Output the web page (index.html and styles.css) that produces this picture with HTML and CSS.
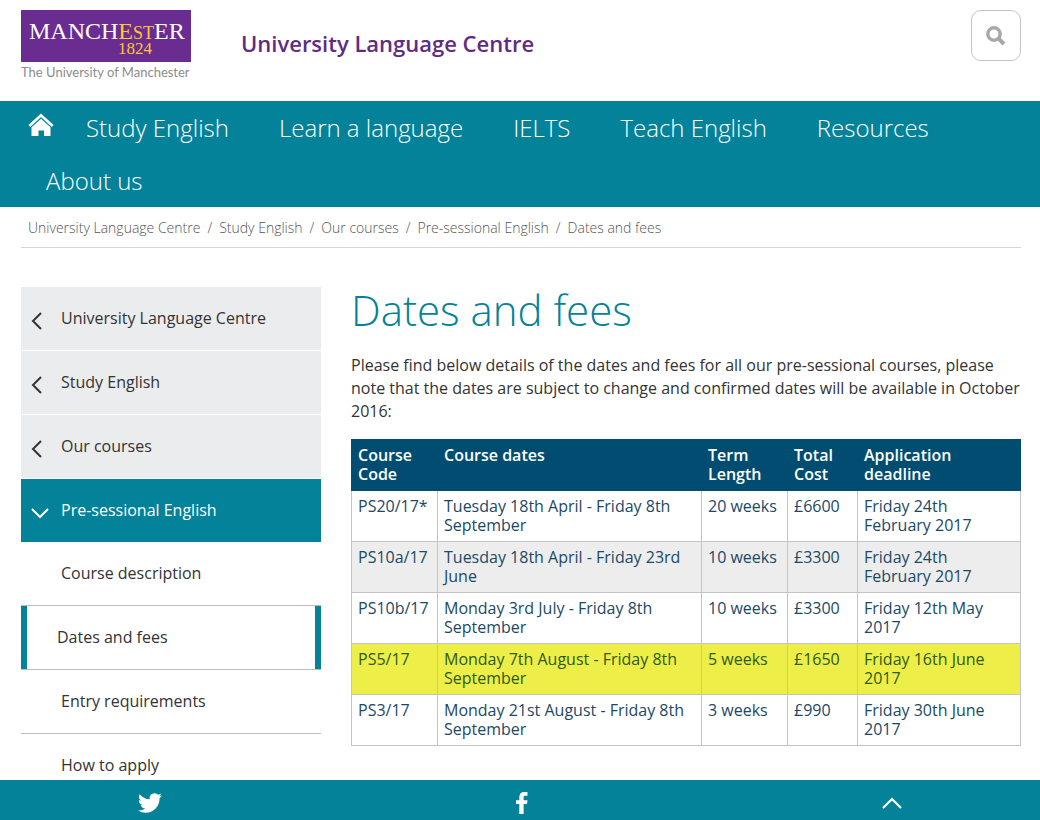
FILE: index.html
```html
<!DOCTYPE html>
<html lang="en">
<head>
<meta charset="utf-8">
<meta name="viewport" content="width=device-width, initial-scale=1">
<title>Dates and fees | University Language Centre</title>
<link rel="stylesheet" href="styles.css">
</head>
<body>
<header class="masthead">
  <a class="logo" href="#" aria-label="The University of Manchester">
    <svg width="170" height="74" viewBox="0 0 170 74" aria-hidden="true">
      <rect width="170" height="52" fill="#6b2c91"/>
      <text class="logo-name" x="8" y="29">MANCH<tspan class="logo-gold">E</tspan><tspan class="logo-gold logo-small">ST</tspan>ER</text>
      <text class="logo-year logo-gold" x="97" y="44">1824</text>
      <text class="logo-caption" x="0" y="67">The University of Manchester</text>
    </svg>
  </a>
  <a class="site-title" href="#">University Language Centre</a>
  <button class="search" type="button" aria-label="Search">
    <svg width="20" height="20" viewBox="0 0 20 20" aria-hidden="true">
      <circle cx="8" cy="8" r="6.2" fill="none" stroke="#a8a8a8" stroke-width="3.4"/>
      <path d="M12.6 12.6L18 18" stroke="#a8a8a8" stroke-width="4"/>
    </svg>
  </button>
</header>
<nav class="main-nav" aria-label="Main">
  <a class="home" href="#" aria-label="Home">
    <svg width="26" height="24" viewBox="0 0 26 24" aria-hidden="true">
      <path d="M1.3 13L13 2.2L24.7 13" fill="none" stroke="#fff" stroke-width="2.6"/>
      <path d="M3.5 14.2L13 5.8L22.5 14.2V23H16V17.5H10.5V23H3.5Z" fill="#fff"/>
    </svg>
  </a>
  <a class="nav-link" href="#">Study English</a>
  <a class="nav-link" href="#">Learn a language</a>
  <a class="nav-link" href="#">IELTS</a>
  <a class="nav-link" href="#">Teach English</a>
  <a class="nav-link" href="#">Resources</a>
  <a class="nav-link" href="#">About us</a>
</nav>
<div class="page">
  <nav aria-label="Breadcrumb">
    <ol class="breadcrumb">
      <li><a href="#">University Language Centre</a></li>
      <li><a href="#">Study English</a></li>
      <li><a href="#">Our courses</a></li>
      <li><a href="#">Pre-sessional English</a></li>
      <li><a href="#">Dates and fees</a></li>
    </ol>
  </nav>
  <div class="columns">
    <nav class="side-nav" aria-label="Section">
      <a class="side-parent" href="#"><svg class="chevron" viewBox="0 0 18 18" aria-hidden="true"><path d="M10 1L2 9L10 17"/></svg>University Language Centre</a>
      <a class="side-parent" href="#"><svg class="chevron" viewBox="0 0 18 18" aria-hidden="true"><path d="M10 1L2 9L10 17"/></svg>Study English</a>
      <a class="side-parent" href="#"><svg class="chevron" viewBox="0 0 18 18" aria-hidden="true"><path d="M10 1L2 9L10 17"/></svg>Our courses</a>
      <a class="side-section" href="#"><svg class="chevron" viewBox="0 0 18 18" aria-hidden="true"><path d="M1 5L9 13L17 5"/></svg>Pre-sessional English</a>
      <a class="side-child" href="#">Course description</a>
      <a class="side-child side-current" href="#" aria-current="page">Dates and fees</a>
      <a class="side-child" href="#">Entry requirements</a>
      <a class="side-child" href="#">How to apply</a>
    </nav>
    <main class="content">
      <h1>Dates and fees</h1>
      <p>Please find below details of the dates and fees for all our pre-sessional courses, please note that the dates are subject to change and confirmed dates will be available in October 2016:</p>
      <table class="fees">
        <colgroup><col class="col-code"><col class="col-dates"><col class="col-term"><col class="col-cost"><col></colgroup>
        <thead>
          <tr><th scope="col">Course Code</th><th scope="col">Course dates</th><th scope="col">Term Length</th><th scope="col">Total Cost</th><th scope="col">Application deadline</th></tr>
        </thead>
        <tbody>
          <tr><td>PS20/17*</td><td>Tuesday 18th April - Friday 8th September</td><td>20 weeks</td><td>£6600</td><td>Friday 24th February 2017</td></tr>
          <tr class="shaded"><td>PS10a/17</td><td>Tuesday 18th April - Friday 23rd June</td><td>10 weeks</td><td>£3300</td><td>Friday 24th February 2017</td></tr>
          <tr><td>PS10b/17</td><td>Monday 3rd July - Friday 8th September</td><td>10 weeks</td><td>£3300</td><td>Friday 12th May 2017</td></tr>
          <tr class="marked"><td>PS5/17</td><td>Monday 7th August - Friday 8th September</td><td>5 weeks</td><td>£1650</td><td>Friday 16th June 2017</td></tr>
          <tr><td>PS3/17</td><td>Monday 21st August - Friday 8th September</td><td>3 weeks</td><td>£990</td><td>Friday 30th June 2017</td></tr>
        </tbody>
      </table>
    </main>
  </div>
</div>
<footer class="share-bar">
  <a class="share-link" href="#" aria-label="Twitter">
    <svg width="24" height="22" viewBox="0 2 24 20" aria-hidden="true"><path fill="#fff" d="M23.95 4.57a10 10 0 0 1-2.82.77 4.96 4.96 0 0 0 2.16-2.72c-.95.55-2 .95-3.13 1.18a4.92 4.92 0 0 0-8.38 4.48C7.69 8.09 4.07 6.13 1.64 3.16a4.82 4.82 0 0 0-.67 2.48c0 1.71.87 3.21 2.19 4.1a4.9 4.9 0 0 1-2.23-.62v.06a4.92 4.92 0 0 0 3.95 4.83 5 5 0 0 1-2.21.08 4.94 4.94 0 0 0 4.6 3.42A9.87 9.87 0 0 1 0 19.54a13.99 13.99 0 0 0 7.56 2.21c9.05 0 14-7.5 14-13.98 0-.21 0-.42-.02-.63a9.94 9.94 0 0 0 2.41-2.57z"/></svg>
  </a>
  <a class="share-link" href="#" aria-label="Facebook">
    <svg width="12" height="22" viewBox="0 0 12 22" aria-hidden="true"><path fill="#fff" d="M3.3 22V12H0V8.2H3.3V5.2C3.3 1.9 5.2 0 8.3 0H11.5V3.8H9.4C8 3.8 7.6 4.4 7.6 5.6V8.2H11.5L11 12H7.6V22Z"/></svg>
  </a>
  <a class="share-link" href="#" aria-label="Back to top">
    <svg width="20" height="12" viewBox="0 0 20 12" aria-hidden="true"><path d="M1 11L10 2L19 11" fill="none" stroke="#fff" stroke-width="2.2"/></svg>
  </a>
</footer>
</body>
</html>
```

FILE: styles.css
```css
* { box-sizing: border-box; }

body {
  margin: 0;
  background: #fff;
  color: #333;
  font-family: "Open Sans", sans-serif;
  font-size: 16px;
  line-height: 23px;
}

a { color: inherit; text-decoration: none; }

.masthead {
  display: flex;
  align-items: flex-start;
  padding: 10px 19px 17px 21px;
}

.logo { display: block; }
.logo svg { display: block; }
.logo-name { fill: #fff; font-family: "Liberation Serif", serif; font-size: 24px; }
.logo-small { font-size: 18px; }
.logo-year { font-family: "Liberation Serif", serif; font-size: 17px; }
.logo-gold { fill: #fdc82f; }
.logo-caption { fill: #8c8c8c; font-family: Lato, sans-serif; font-size: 13px; }

.site-title {
  margin: 21px auto 0 50px;
  color: #5f2b86;
  font-size: 22px;
  font-weight: 600;
  line-height: 24px;
}

.search {
  display: grid;
  place-items: center;
  width: 50px;
  height: 51px;
  padding: 0;
  border: 1px solid #c4c4c4;
  border-radius: 10px;
  background: #fff;
}

.main-nav {
  display: flex;
  flex-wrap: wrap;
  padding: 0 21px;
  background: #038299;
  color: #fff;
  font-size: 24px;
  font-weight: 300;
  line-height: 53px;
}

.home { width: 40px; padding: 12px 0 0 7px; line-height: 1; }
.home svg { display: block; }
.nav-link { padding: 0 25px; }

.page { padding: 0 19px 0 21px; }

.breadcrumb {
  display: flex;
  flex-wrap: wrap;
  margin: 0;
  padding: 10px 7px 8px;
  border-bottom: 1px solid #d4d4d4;
  color: #555;
  font-size: 14px;
  font-weight: 340;
  line-height: 22px;
  list-style: none;
}

.breadcrumb li + li::before { content: "/"; padding: 0 7px; }

.columns { display: flex; gap: 30px; padding-top: 39px; }

.side-nav { flex: 0 0 300px; }

.side-nav a {
  display: flex;
  align-items: center;
  min-height: 64px;
  padding: 0 40px;
}

.side-nav .side-parent {
  padding-left: 10px;
  border-bottom: 1px solid #fff;
  background: #ebeced;
}

.side-nav .side-section {
  min-height: 63px;
  padding-left: 10px;
  background: #038299;
  color: #fff;
  font-weight: 500;
}

.side-nav .side-child { border-bottom: 1px solid #bbb; }

.side-nav .side-current {
  padding: 0 36px;
  box-shadow: inset 6px 0 #038299, inset -6px 0 #038299;
}

.chevron {
  flex: none;
  width: 18px;
  height: 18px;
  margin: 4px 12px 0 0;
  fill: none;
  stroke: currentColor;
  stroke-width: 2;
}

.content { flex: 1; min-width: 0; }

h1 {
  margin: 0;
  color: #038299;
  font-size: 42px;
  font-weight: 300;
  line-height: 46px;
}

.content p { margin: 21px 0 16px; }

.fees {
  width: 100%;
  border-collapse: collapse;
  table-layout: fixed;
  color: #1b4965;
  line-height: 19px;
}

.col-code, .col-term { width: 86px; }
.col-dates { width: 264px; }
.col-cost { width: 70px; }

.fees th, .fees td {
  padding: 6px;
  text-align: left;
  vertical-align: top;
}

.fees td { border: 1px solid #c4c4c8; }
.fees th { border: 1px solid #004d71; background: #004d71; color: #fff; font-weight: 600; }
.shaded { background: #ededed; }
.marked { background: #eeee48; color: #2d5c14; }

.share-bar {
  position: fixed;
  right: 0;
  bottom: 0;
  left: 0;
  display: flex;
  align-items: center;
  justify-content: space-between;
  height: 40px;
  padding: 6px 13.25% 0;
  background: #038299;
}

.share-link svg { display: block; }
```
